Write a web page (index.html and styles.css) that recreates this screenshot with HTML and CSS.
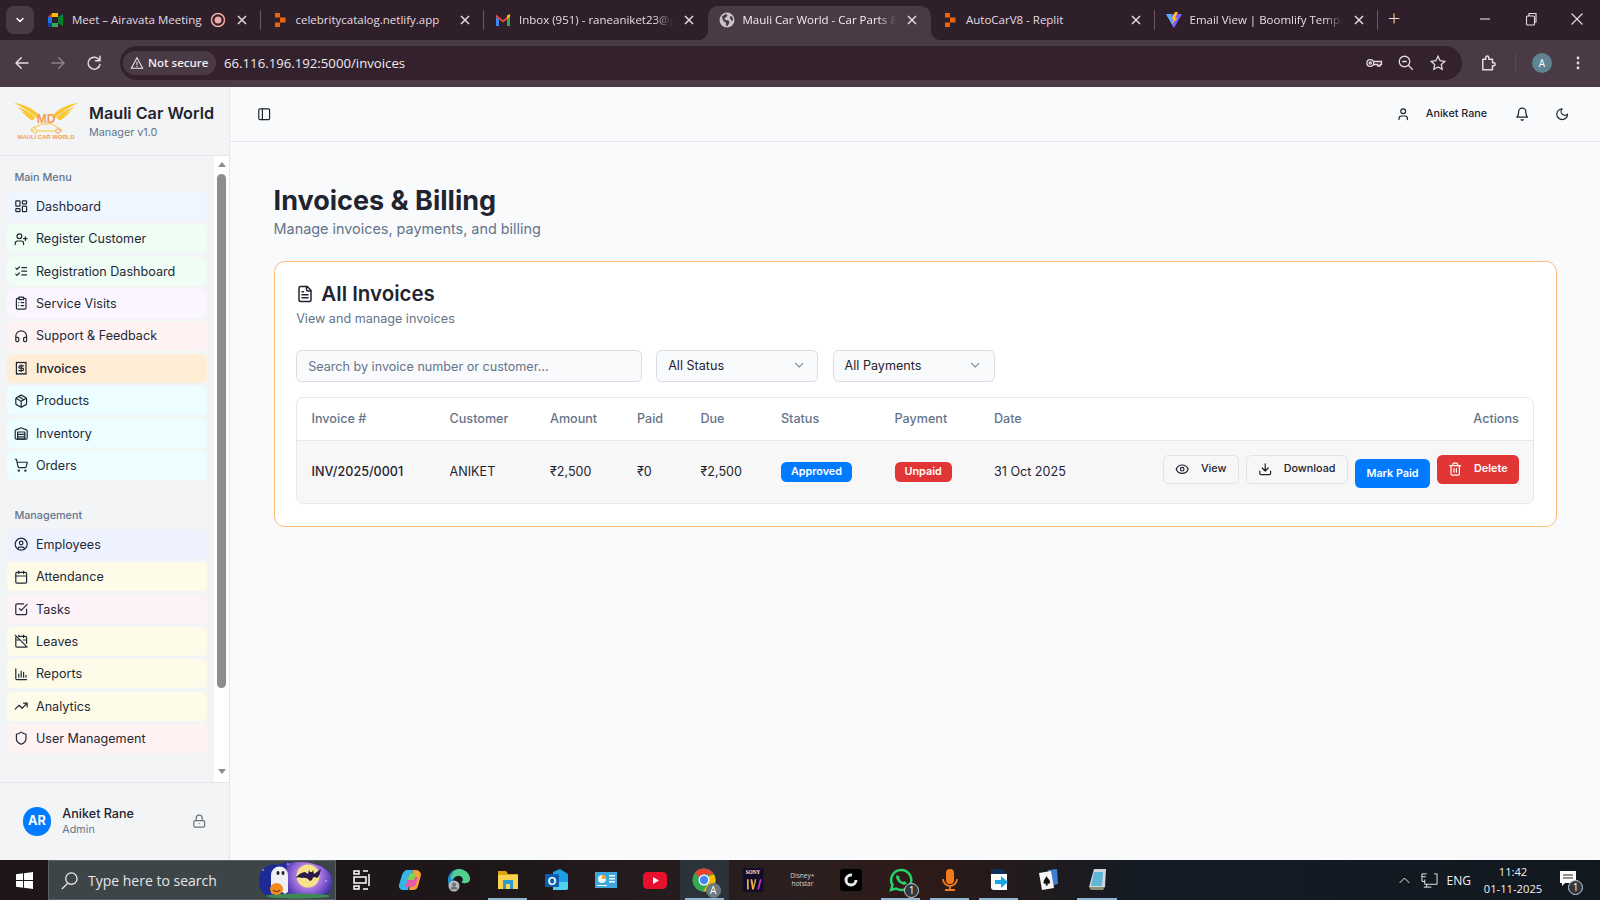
FILE: index.html
```html
<!DOCTYPE html>
<html lang="en">
<head>
<meta charset="utf-8">
<title>Mauli Car World - Invoices</title>
<link rel="stylesheet" href="styles.css">
</head>
<body>
<svg class="sprite" xmlns="http://www.w3.org/2000/svg">
  <symbol id="i-dash" viewBox="0 0 24 24"><rect x="3" y="3" width="7" height="9" rx="1"/><rect x="14" y="3" width="7" height="5" rx="1"/><rect x="14" y="12" width="7" height="9" rx="1"/><rect x="3" y="16" width="7" height="5" rx="1"/></symbol>
  <symbol id="i-userplus" viewBox="0 0 24 24"><path d="M16 21v-2a4 4 0 0 0-4-4H6a4 4 0 0 0-4 4v2"/><circle cx="9" cy="7" r="4"/><path d="M19 8v6M22 11h-6"/></symbol>
  <symbol id="i-checks" viewBox="0 0 24 24"><path d="m3 17 2 2 4-4M3 7l2 2 4-4M13 6h8M13 12h8M13 18h8"/></symbol>
  <symbol id="i-clip" viewBox="0 0 24 24"><rect x="8" y="2" width="8" height="4" rx="1"/><path d="M16 4h2a2 2 0 0 1 2 2v14a2 2 0 0 1-2 2H6a2 2 0 0 1-2-2V6a2 2 0 0 1 2-2h2M12 11h4M12 16h4M8 11h.01M8 16h.01"/></symbol>
  <symbol id="i-head" viewBox="0 0 24 24"><path d="M3 14h3a2 2 0 0 1 2 2v3a2 2 0 0 1-2 2H5a2 2 0 0 1-2-2v-7a9 9 0 0 1 18 0v7a2 2 0 0 1-2 2h-1a2 2 0 0 1-2-2v-3a2 2 0 0 1 2-2h3"/></symbol>
  <symbol id="i-receipt" viewBox="0 0 24 24"><path d="M4 2v20l2-1 2 1 2-1 2 1 2-1 2 1 2-1 2 1V2l-2 1-2-1-2 1-2-1-2 1-2-1-2 1Z"/><path d="M16 8h-6a2 2 0 1 0 0 4h4a2 2 0 1 1 0 4H8M12 17.5v-11"/></symbol>
  <symbol id="i-package" viewBox="0 0 24 24"><path d="M11 21.73a2 2 0 0 0 2 0l7-4A2 2 0 0 0 21 16V8a2 2 0 0 0-1-1.73l-7-4a2 2 0 0 0-2 0l-7 4A2 2 0 0 0 3 8v8a2 2 0 0 0 1 1.73zM12 22V12M3.29 7 12 12l8.71-5M7.5 4.27l9 5.15"/></symbol>
  <symbol id="i-ware" viewBox="0 0 24 24"><path d="M22 8.35V20a2 2 0 0 1-2 2H4a2 2 0 0 1-2-2V8.35A2 2 0 0 1 3.26 6.5l8-3.2a2 2 0 0 1 1.48 0l8 3.2A2 2 0 0 1 22 8.35ZM6 18h12M6 14h12"/><rect x="6" y="10" width="12" height="12"/></symbol>
  <symbol id="i-cart" viewBox="0 0 24 24"><circle cx="8" cy="21" r="1"/><circle cx="19" cy="21" r="1"/><path d="M2.05 2.05h2l2.66 12.42a2 2 0 0 0 2 1.58h9.78a2 2 0 0 0 1.95-1.57l1.65-7.43H5.12"/></symbol>
  <symbol id="i-ucircle" viewBox="0 0 24 24"><circle cx="12" cy="12" r="10"/><circle cx="12" cy="10" r="3"/><path d="M7 20.66V19a2 2 0 0 1 2-2h6a2 2 0 0 1 2 2v1.66"/></symbol>
  <symbol id="i-cal" viewBox="0 0 24 24"><path d="M8 2v4M16 2v4M3 10h18"/><rect x="3" y="4" width="18" height="18" rx="2"/></symbol>
  <symbol id="i-task" viewBox="0 0 24 24"><path d="m9 11 3 3L22 4M21 12v7a2 2 0 0 1-2 2H5a2 2 0 0 1-2-2V5a2 2 0 0 1 2-2h11"/></symbol>
  <symbol id="i-caloff" viewBox="0 0 24 24"><path d="M4.2 4.2A2 2 0 0 0 3 6v14a2 2 0 0 0 2 2h14a2 2 0 0 0 1.82-1.18M21 15.5V6a2 2 0 0 0-2-2H9.5M16 2v4M8 2v2M3 10h7M21 10h-5.5M2 2l20 20"/></symbol>
  <symbol id="i-bars" viewBox="0 0 24 24"><path d="M3 3v16a2 2 0 0 0 2 2h16M8 17v-5M12 17V7M16 17v-8M20 17v-3"/></symbol>
  <symbol id="i-trend" viewBox="0 0 24 24"><path d="M22 7l-8.5 8.5-5-5L2 17M16 7h6v6"/></symbol>
  <symbol id="i-shield" viewBox="0 0 24 24"><path d="M20 13c0 5-3.5 7.5-7.66 8.95a1 1 0 0 1-.67-.01C7.5 20.5 4 18 4 13V6a1 1 0 0 1 1-1c2 0 4.5-1.2 6.24-2.72a1.17 1.17 0 0 1 1.52 0C14.51 3.81 17 5 19 5a1 1 0 0 1 1 1z"/></symbol>
  <symbol id="i-lock" viewBox="0 0 24 24"><rect x="3" y="11" width="18" height="11" rx="2"/><path d="M7 11V7a5 5 0 0 1 10 0v4M12 16h.01"/></symbol>
  <symbol id="i-panel" viewBox="0 0 24 24"><rect x="3" y="3" width="18" height="18" rx="2"/><path d="M9 3v18"/></symbol>
  <symbol id="i-user" viewBox="0 0 24 24"><path d="M19 21v-2a4 4 0 0 0-4-4H9a4 4 0 0 0-4 4v2"/><circle cx="12" cy="7" r="4"/></symbol>
  <symbol id="i-bell" viewBox="0 0 24 24"><path d="M6 8a6 6 0 0 1 12 0c0 7 3 9 3 9H3s3-2 3-9M10.3 21a1.94 1.94 0 0 0 3.4 0"/></symbol>
  <symbol id="i-moon" viewBox="0 0 24 24"><path d="M12 3a6 6 0 0 0 9 9 9 9 0 1 1-9-9Z"/></symbol>
  <symbol id="i-file" viewBox="0 0 24 24"><path d="M15 2H6a2 2 0 0 0-2 2v16a2 2 0 0 0 2 2h12a2 2 0 0 0 2-2V7ZM14 2v4a2 2 0 0 0 2 2h4M10 9H8M16 13H8M16 17H8"/></symbol>
  <symbol id="i-eye" viewBox="0 0 24 24"><path d="M2 12s3-7 10-7 10 7 10 7-3 7-10 7-10-7-10-7Z"/><circle cx="12" cy="12" r="3"/></symbol>
  <symbol id="i-down" viewBox="0 0 24 24"><path d="M21 15v4a2 2 0 0 1-2 2H5a2 2 0 0 1-2-2v-4M7 10l5 5 5-5M12 15V3"/></symbol>
  <symbol id="i-trash" viewBox="0 0 24 24"><path d="M3 6h18M19 6v14c0 1-1 2-2 2H7c-1 0-2-1-2-2V6M8 6V4c0-1 1-2 2-2h4c1 0 2 1 2 2v2M10 11v6M14 11v6"/></symbol>
  <symbol id="i-chev" viewBox="0 0 24 24"><path d="m6 9 6 6 6-6"/></symbol>
  <symbol id="i-x" viewBox="0 0 16 16"><path d="M4 4l8 8M12 4l-8 8"/></symbol>
  <symbol id="f-replit" viewBox="0 0 16 16"><path fill="#f26207" stroke="none" d="M3 1h5v4.500H3zM8 5.500h5.500v5H8zM3 10.500h5V15H3z"/></symbol>
  <symbol id="f-globe" viewBox="0 0 16 16"><circle cx="8" cy="8" r="7.500" fill="#c9c3c8" stroke="none"/><path fill="#4a3a45" stroke="none" d="M3 4.500 6.500 2l2 1-1 2-2 1 1 2 3 .5 1 2-2 3.500-1.500-.5V11L4 8.500ZM11 4l2.500 1 .5 4-1.500-.5-1.500-2Z"/></symbol>
  <symbol id="logo-wing" viewBox="0 0 64 40"><path d="M0 0C10 1 20 6 26 13L23 15C17 9 8 4 0 0Z"/><path d="M3 4C10 6 16 9 22 15L19 16C14 12 9 8 3 4Z"/><path d="M7 8C12 10 16 12 20 17L17 17C13 14 10 11 7 8Z"/></symbol>
</svg>

<header class="tabstrip">
  <div class="tabmenu"><svg class="ico ico-12 ico-w" viewBox="0 0 24 24"><use href="#i-chev"/></svg></div>
  <div class="tab sep">
    <svg class="fav" viewBox="0 0 16 16"><path fill="#fbbc04" d="M4 1h6v4H4z"/><path fill="#ea4335" d="M0 5l4-4v4z"/><path fill="#1a73e8" d="M0 5h4v6H0z"/><path fill="#0d47a1" d="M0 11h4v4H1.500A1.500 1.500 0 0 1 0 13.500z"/><path fill="#34a853" d="M4 11h6v4H4z"/><path fill="#00832d" d="M10 5l5-3v12l-5-3z"/></svg>
    <span class="tabtext">Meet – Airavata Meeting</span>
    <svg class="rec" viewBox="0 0 16 16"><circle cx="8" cy="8" r="6.500" fill="none" stroke="#f4a9a0" stroke-width="1.500"/><circle cx="8" cy="8" r="3.500" fill="#f4a9a0"/></svg>
    <svg class="tabx"><use href="#i-x"/></svg>
  </div>
  <div class="tab sep">
    <svg class="fav"><use href="#f-replit"/></svg>
    <span class="tabtext">celebritycatalog.netlify.app</span>
    <svg class="tabx"><use href="#i-x"/></svg>
  </div>
  <div class="tab">
    <svg class="fav" viewBox="0 0 16 16"><path fill="#4285f4" d="M1 4v10h3V7z"/><path fill="#34a853" d="M12 7v7h3V4z"/><path fill="#ea4335" d="M1 2.500 8 8l7-5.500V5L8 10.500 1 5z"/><path fill="#fbbc04" d="M12 3.500 15 2v3l-3 2z"/></svg>
    <span class="tabtext fade">Inbox (951) - raneaniket23@g</span>
    <svg class="tabx"><use href="#i-x"/></svg>
  </div>
  <div class="tab active">
    <svg class="fav"><use href="#f-globe"/></svg>
    <span class="tabtext fade">Mauli Car World - Car Parts &amp;</span>
    <svg class="tabx"><use href="#i-x"/></svg>
  </div>
  <div class="tab sep">
    <svg class="fav"><use href="#f-replit"/></svg>
    <span class="tabtext">AutoCarV8 - Replit</span>
    <svg class="tabx"><use href="#i-x"/></svg>
  </div>
  <div class="tab sep">
    <svg class="fav" viewBox="0 0 16 16"><path fill="#7c5cff" d="M0 2h16L8 16z"/><path fill="#41d1ff" d="M0 2h5l3 14z" opacity=".7"/><path fill="#ffc517" d="M9 0l3 0-3 6 2.500 0L6 12l1.500-5H5.500z"/></svg>
    <span class="tabtext fade">Email View | Boomlify Tempo</span>
    <svg class="tabx"><use href="#i-x"/></svg>
  </div>
  <div class="newtab">+</div>
  <div class="winctl">
    <svg class="winbtn" viewBox="0 0 16 16"><path d="M3 8h10"/></svg>
    <svg class="winbtn" viewBox="0 0 16 16"><rect x="3.500" y="5" width="8" height="9" rx="1"/><path d="M6 5V2.500h7V11h-1.500"/></svg>
    <svg class="winbtn" viewBox="0 0 16 16"><path d="M2.500 2.500l11 11M13.500 2.500l-11 11"/></svg>
  </div>
</header>

<div class="toolbar">
  <svg class="tool tool-first" viewBox="0 0 24 24"><path d="M20 12H5M11 5l-7 7 7 7"/></svg>
  <svg class="tool dim" viewBox="0 0 24 24"><path d="M4 12h15M13 5l7 7-7 7"/></svg>
  <svg class="tool" viewBox="0 0 24 24"><path d="M19 8a8 8 0 1 0 1 6M20 3v6h-6"/></svg>
  <div class="omnibox">
    <div class="chip">
      <svg class="chip-ico" viewBox="0 0 16 16"><path d="M8 2 1.500 14h13z M8 6.500v4 M8 11.500v1"/></svg>
      <span>Not secure</span>
    </div>
    <span class="url">66.116.196.192:5000/invoices</span>
    <svg class="omni-ico" viewBox="0 0 24 24"><circle cx="7" cy="12" r="4.500"/><circle cx="7" cy="12" r="1.500"/><path d="M11.500 10H22v4h-2v2h-3v-2h-5.500"/></svg>
    <svg class="omni-ico" viewBox="0 0 24 24"><circle cx="10" cy="10" r="7"/><path d="M15 15l6 6M7 10h6"/></svg>
    <svg class="omni-ico" viewBox="0 0 24 24"><path d="M12 3l2.800 6 6.200.8-4.600 4.300 1.200 6.400L12 17.300 6.400 20.500l1.200-6.400L3 9.800 9.200 9z"/></svg>
  </div>
  <svg class="tool tool-ext" viewBox="0 0 24 24"><path d="M5 7h4V4.500a2 2 0 0 1 4 0V7h5v4.500h1.500a2 2 0 0 1 0 4H18V21H5z"/></svg>
  <span class="tool-sep"></span>
  <div class="profile">A</div>
  <svg class="tool-menu" viewBox="0 0 16 16"><circle cx="8" cy="3" r="1.400"/><circle cx="8" cy="8" r="1.400"/><circle cx="8" cy="13" r="1.400"/></svg>
</div>

<div class="app">
  <aside class="sidebar">
    <div class="brand">
      <svg class="logo" viewBox="0 0 64 40">
        <use href="#logo-wing" class="wing" width="64" height="40"/>
        <use href="#logo-wing" class="wing" width="64" height="40" transform="translate(64 0) scale(-1 1)"/>
        <text class="logo-md" x="32" y="19.500" text-anchor="middle">MD</text>
        <path fill="none" stroke="#fbc531" stroke-width="1" d="M17 28c0-3 2-4 5-4l5-3h11l6 4c2 0 4 1 4 3z"/>
        <circle cx="21" cy="28" r="2.200" fill="#f3f4f6" stroke="#fbc531" stroke-width="1"/>
        <circle cx="44" cy="28" r="2.200" fill="#f3f4f6" stroke="#f49a5a" stroke-width="1"/>
        <text class="logo-name" x="32" y="36" text-anchor="middle">MAULI CAR WORLD</text>
      </svg>
      <div class="brand-text">
        <div class="brand-title">Mauli Car World</div>
        <div class="brand-sub">Manager v1.0</div>
      </div>
    </div>
    <div class="navwrap">
      <nav class="nav">
        <div class="navlabel">Main Menu</div>
        <ul class="navlist">
          <li class="navitem c-blue"><svg class="ico"><use href="#i-dash"/></svg>Dashboard</li>
          <li class="navitem c-green"><svg class="ico"><use href="#i-userplus"/></svg>Register Customer</li>
          <li class="navitem c-green"><svg class="ico"><use href="#i-checks"/></svg>Registration Dashboard</li>
          <li class="navitem c-purple"><svg class="ico"><use href="#i-clip"/></svg>Service Visits</li>
          <li class="navitem c-red"><svg class="ico"><use href="#i-head"/></svg>Support &amp; Feedback</li>
          <li class="navitem c-orange"><svg class="ico"><use href="#i-receipt"/></svg>Invoices</li>
          <li class="navitem c-cyan"><svg class="ico"><use href="#i-package"/></svg>Products</li>
          <li class="navitem c-cyan"><svg class="ico"><use href="#i-ware"/></svg>Inventory</li>
          <li class="navitem c-cyan"><svg class="ico"><use href="#i-cart"/></svg>Orders</li>
        </ul>
        <div class="navlabel navlabel-2">Management</div>
        <ul class="navlist">
          <li class="navitem c-indigo"><svg class="ico"><use href="#i-ucircle"/></svg>Employees</li>
          <li class="navitem c-yellow"><svg class="ico"><use href="#i-cal"/></svg>Attendance</li>
          <li class="navitem c-pink"><svg class="ico"><use href="#i-task"/></svg>Tasks</li>
          <li class="navitem c-yellow"><svg class="ico"><use href="#i-caloff"/></svg>Leaves</li>
          <li class="navitem c-yellow"><svg class="ico"><use href="#i-bars"/></svg>Reports</li>
          <li class="navitem c-yellow"><svg class="ico"><use href="#i-trend"/></svg>Analytics</li>
          <li class="navitem c-red"><svg class="ico"><use href="#i-shield"/></svg>User Management</li>
        </ul>
      </nav>
      <div class="scrolltrack">
        <span class="arrow-up"></span>
        <span class="thumb"></span>
        <span class="arrow-down"></span>
      </div>
    </div>
    <div class="sidefoot">
      <div class="avatar">AR</div>
      <div class="foot-text">
        <div class="foot-name">Aniket Rane</div>
        <div class="foot-role">Admin</div>
      </div>
      <svg class="ico ico-lock"><use href="#i-lock"/></svg>
    </div>
  </aside>

  <main class="main">
    <div class="topbar">
      <svg class="ico top-panel"><use href="#i-panel"/></svg>
      <div class="top-right">
        <svg class="ico"><use href="#i-user"/></svg>
        <span class="top-name">Aniket Rane</span>
        <svg class="ico top-bell"><use href="#i-bell"/></svg>
        <svg class="ico top-moon"><use href="#i-moon"/></svg>
      </div>
    </div>
    <div class="content">
      <h1 class="title">Invoices &amp; Billing</h1>
      <p class="subtitle">Manage invoices, payments, and billing</p>
      <section class="card">
        <h2 class="card-title"><svg class="ico ico-title"><use href="#i-file"/></svg>All Invoices</h2>
        <p class="card-desc">View and manage invoices</p>
        <div class="filters">
          <input class="search" type="text" placeholder="Search by invoice number or customer...">
          <div class="select">All Status<svg class="ico ico-chev"><use href="#i-chev"/></svg></div>
          <div class="select">All Payments<svg class="ico ico-chev"><use href="#i-chev"/></svg></div>
        </div>
        <div class="tablewrap">
          <table class="table">
            <colgroup>
              <col class="col-inv"><col class="col-cust"><col class="col-amt"><col class="col-paid"><col class="col-due"><col class="col-status"><col class="col-pay"><col class="col-date"><col>
            </colgroup>
            <thead>
              <tr><th>Invoice #</th><th>Customer</th><th>Amount</th><th>Paid</th><th>Due</th><th>Status</th><th>Payment</th><th>Date</th><th class="right">Actions</th></tr>
            </thead>
            <tbody>
              <tr>
                <td class="strong">INV/2025/0001</td>
                <td>ANIKET</td>
                <td>₹2,500</td>
                <td>₹0</td>
                <td>₹2,500</td>
                <td><span class="badge b-blue">Approved</span></td>
                <td><span class="badge b-red">Unpaid</span></td>
                <td>31 Oct 2025</td>
                <td class="actions-cell">
                  <div class="actions">
                    <button class="btn btn-out"><svg class="ico ico-btn"><use href="#i-eye"/></svg>View</button>
                    <button class="btn btn-out"><svg class="ico ico-btn"><use href="#i-down"/></svg>Download</button>
                    <button class="btn btn-blue">Mark Paid</button>
                    <button class="btn btn-red"><svg class="ico ico-btn"><use href="#i-trash"/></svg>Delete</button>
                  </div>
                </td>
              </tr>
            </tbody>
          </table>
        </div>
      </section>
    </div>
  </main>
</div>

<footer class="taskbar">
  <div class="startbtn">
    <svg class="winlogo" viewBox="0 0 18 18"><path fill="#fff" d="M0 2.500 7.500 1.400V8.500H0zM8.500 1.300 18 0V8.500H8.500zM0 9.500H7.500V16.600L0 15.500zM8.500 9.500H18V18L8.500 16.700z"/></svg>
  </div>
  <div class="tasksearch">
    <svg class="sglass" viewBox="0 0 20 20"><circle cx="12" cy="8" r="6"/><path d="M8 13 2 19"/></svg>
    <span class="stext">Type here to search</span>
    <svg class="doodle" viewBox="0 0 76 38">
      <defs>
        <radialGradient id="glow" cx="50" cy="15" r="26" gradientUnits="userSpaceOnUse">
          <stop offset="0" stop-color="#e9c9f2"/>
          <stop offset=".55" stop-color="#a06fdc"/>
          <stop offset="1" stop-color="#3f2fa8"/>
        </radialGradient>
      </defs>
      <path fill="#1e2a96" d="M1 20C0 8 10 2 20 4 30 0 40 1 44 4 58 0 72 6 74 18 75 27 72 33 64 35H10C4 33 1 28 1 20Z"/>
      <path fill="url(#glow)" d="M28 3C40 0 50 1 56 3 66 5 73 11 74 18 75 27 72 33 64 35H30Z"/>
      <ellipse cx="40" cy="35" rx="32" ry="2.500" fill="#3d8a55"/>
      <circle cx="50" cy="15" r="11.500" fill="#f6e38a"/>
      <path fill="#2a1a4a" d="M37 17C41 13 44 11 47 11L50 13 51 9 52 11H54L55 9 56 13C59 11 61 9 63 8 62 11 62 15 59 17 56 15 55 16 54 19L52 20C50 17 47 16 44 17 41 16 39 16 37 17Z"/>
      <path fill="#f1eef6" d="M13 31V14A8 8 0 0 1 30 14V31L27 33 24 31 20 33 17 31 14 33Z"/>
      <ellipse cx="20" cy="12" rx="1.500" ry="2" fill="#222"/>
      <ellipse cx="25" cy="12" rx="1.500" ry="2" fill="#222"/>
      <ellipse cx="18.500" cy="28" rx="6.500" ry="6" fill="#f08a1e"/>
      <path fill="none" stroke="#3a1d05" stroke-width="1" d="M15 29c2 2 5 2 7 0"/>
      <circle cx="5" cy="9" r=".7" fill="#fff"/><circle cx="30" cy="3" r=".7" fill="#fff"/><circle cx="68" cy="20" r=".7" fill="#fff"/>
    </svg>
  </div>
  <div class="tray-apps">
    <div class="slot"><svg class="tico" viewBox="0 0 24 24"><path fill="none" stroke="#fff" stroke-width="1.500" d="M5 3h5v3H5zM14 3h5M20 6v12M5 9h12v6H5zM5 18h5v3H5zM14 21h5"/></svg></div>
    <div class="slot"><svg class="tico" viewBox="0 0 24 24"><path fill="#37b4e8" d="M9 2h6l-5 20H5a4 4 0 0 1-4-5l3-10c1-3 3-5 5-5z"/><path fill="#f5a13b" d="M15 2h3a5 5 0 0 1 5 5l-3 11a5 5 0 0 1-5 4h-4z"/><path fill="#e85aa8" d="M11 9h9l-2 7a4 4 0 0 1-4 3H7z"/><path fill="#8bd04a" d="M13 5h5l-2 7H9z"/></svg></div>
    <div class="slot"><svg class="tico" viewBox="0 0 24 24"><path fill="#1f8fd4" d="M1 13A11 11 0 0 1 23 11C23 15 18 16 14.500 14.500 18 12 15 6.500 10 8 6 9.500 5 14 7.500 18.500 9 21 6 23 4 21 2 19 1 16 1 13Z"/><path fill="#52cf8e" d="M12 1A11 11 0 0 1 23 11C23 15 18 16 14.500 14.500 18 12 15 6.500 10 8 6.500 9 4 12 4 12 4 6 7 1 12 1Z"/><circle cx="7" cy="18" r="5.500" fill="#b9bcc0"/><circle cx="7" cy="16.500" r="2" fill="#6d7277"/><path fill="#6d7277" d="M3.500 21.500a3.500 3 0 0 1 7 0Z"/></svg></div>
    <div class="slot run"><svg class="tico" viewBox="0 0 24 24"><path fill="#e0a412" d="M2 3h8l2 3h10v15H2z"/><path fill="#fbd24e" d="M2 7h20v14H2z"/><path fill="#2a9ad6" d="M7 21V13a1 1 0 0 1 1-1h8a1 1 0 0 1 1 1v8h-3v-5h-4v5Z"/></svg></div>
    <div class="slot"><svg class="tico" viewBox="0 0 24 24"><path fill="#1f9ee8" d="M8 4l7-3 8 5v14a2 2 0 0 1-2 2H8Z"/><path fill="#52d0ee" d="M8 14h15v6a2 2 0 0 1-2 2H8Z"/><rect x="0" y="6" width="14" height="13" rx="1" fill="#0f5cae"/><text class="t-o" x="7" y="16.500" text-anchor="middle">O</text></svg></div>
    <div class="slot"><svg class="tico" viewBox="0 0 24 24"><rect x="1" y="4" width="22" height="16" fill="#3ba7dd"/><circle cx="8" cy="11" r="4" fill="#e8f5fb"/><path fill="#f6a623" d="M8 11V7a4 4 0 0 1 4 4Z"/><path fill="#fff" d="M15 7h6v1.500h-6zM15 10h6v1.500h-6zM15 13h6v1.500h-6zM3 17h10v1H3z"/></svg></div>
    <div class="slot"><svg class="tico" viewBox="0 0 24 24"><rect x="0" y="4" width="24" height="17" rx="4.500" fill="#e8112d"/><path fill="#fff" d="M10 9v7l6-3.500z"/></svg></div>
    <div class="slot slot-on run"><svg class="tico" viewBox="0 0 24 24"><circle cx="12" cy="12" r="11.500" fill="#34a853"/><path fill="#ea4335" d="M12 .5A11.500 11.500 0 0 1 22 6.500H12A5.500 5.500 0 0 0 7 9.500L3 4.500A11.500 11.500 0 0 1 12 .5Z"/><path fill="#fbbc04" d="M22 6.500A11.500 11.500 0 0 1 11 23.500L16.500 15 17 8Z"/><circle cx="12" cy="12" r="5.500" fill="#fff"/><circle cx="12" cy="12" r="4.200" fill="#4285f4"/></svg><span class="tbadge tbadge-a">A</span></div>
    <div class="slot"><svg class="tico" viewBox="0 0 24 28"><rect x="0" y="0" width="24" height="28" rx="2" fill="#120c28"/><text class="t-sony" x="12" y="7" text-anchor="middle">SONY</text><path fill="#e8b43c" d="M5 25V13h2v12zM9 13h2l2 8 1-8h2l-3 12h-2z"/><path fill="#c63cd0" d="M17 25l3-12h2l-3 12z"/></svg></div>
    <div class="slot"><span class="hotstar">Disney+<br>hotstar</span></div>
    <div class="slot"><svg class="tico" viewBox="0 0 24 24"><rect x="1" y="1" width="22" height="22" rx="3" fill="#000"/><circle cx="12" cy="12" r="5" fill="none" stroke="#e9e9e9" stroke-width="3" stroke-dasharray="24 8"/></svg></div>
    <div class="slot run"><svg class="tico" viewBox="0 0 24 24"><path fill="none" stroke="#25d366" stroke-width="2.500" d="M12 2a10 10 0 0 0-8.500 15L2 22l5-1.500A10 10 0 1 0 12 2z"/><path fill="#25d366" d="M8 7c-2 2 0 6 3 8s5 3 7 0l-3-2-1 1c-2-1-3-2-4-4l1-1z"/></svg><span class="tbadge">1</span></div>
    <div class="slot run"><svg class="tico" viewBox="0 0 24 24"><rect x="8" y="1" width="8" height="15" rx="4" fill="#f47a1f"/><path fill="none" stroke="#f47a1f" stroke-width="1.800" d="M5 11a7 7 0 0 0 14 0M12 18v4M7 22h10"/></svg></div>
    <div class="slot run"><svg class="tico" viewBox="0 0 24 24"><path fill="#0d2f58" d="M4 1h11l5 5v3H4z"/><path fill="#fff" d="M4 6h16v16H7a3 3 0 0 1-3-3z"/><path fill="#1aa5e8" d="M8 12h6V8l7 6-7 6v-4H8z"/></svg></div>
    <div class="slot"><svg class="tico" viewBox="0 0 24 24"><path fill="#3c7fd0" d="M12 2l9-1 1 15-8 2z"/><path fill="#f6f6f6" d="M3 5l12-2 3 17-12 2z"/><path fill="#111" d="M10.500 8c1.500 3 4 4 3.500 6.500-.2 1.500-2 1.700-2.700.7l.7 2.300H9.500l.6-2c-1 .7-2.600.2-2.600-1.300 0-2.300 2-3.500 3-6.200z"/></svg></div>
    <div class="slot run"><svg class="tico" viewBox="0 0 24 24"><path fill="#cfd8dc" d="M9 1h12l-1 18H4z"/><path fill="#5fb7d8" d="M9 4h9l-1 14H6z"/><path fill="#8a8f70" d="M4 19h16l-2 3H6z"/></svg></div>
  </div>
  <div class="systray">
    <svg class="sys-chev" viewBox="0 0 16 16"><path d="M2 11l6-6 6 6"/></svg>
    <svg class="sys-net" viewBox="0 0 18 18"><path d="M1 2h5M1 2v8h3M14 2h3v11H4V8M6 13v3M3 16h8M1 5h4"/></svg>
    <span class="sys-lang">ENG</span>
    <div class="clock"><div>11:42</div><div>01-11-2025</div></div>
    <div class="notif">
      <svg class="notif-ico" viewBox="0 0 18 18"><path fill="#fff" d="M1 1h16v12H6l-3 3v-3H1z"/><path stroke="#222" stroke-width="1" d="M4 5h10M4 8h10"/></svg>
      <span class="tbadge tbadge-n">1</span>
    </div>
  </div>
</footer>
</body>
</html>
```

FILE: styles.css
```css
* { box-sizing: border-box; }
html, body { margin: 0; height: 100%; }
body {
  display: flex;
  flex-direction: column;
  height: 900px;
  overflow: hidden;
  font-family: Inter, "Liberation Sans", sans-serif;
  color: #1f2430;
  background: #f9fafb;
}
.sprite { display: none; }
.ico {
  width: 14.4px;
  height: 14.4px;
  flex: none;
  fill: none;
  stroke: currentColor;
  stroke-width: 2;
  stroke-linecap: round;
  stroke-linejoin: round;
}
.ico-12 { width: 12px; height: 12px; }
.ico-w { color: #fff; stroke-width: 3; }

/* browser tab strip */
.tabstrip {
  height: 40px;
  flex: none;
  display: flex;
  background: #2e1f2b;
  font-family: "Open Sans", "Noto Sans", sans-serif;
  font-size: 11.5px;
  color: #e3dde1;
}
.tabmenu {
  width: 28px;
  height: 28px;
  margin: 6px 3px 0 6px;
  border-radius: 8px;
  background: #4a3a45;
  display: flex;
  align-items: center;
  justify-content: center;
}
.tab {
  position: relative;
  width: 223.500px;
  height: 34px;
  margin-top: 6px;
  padding: 0 11px 6px 11px;
  display: flex;
  align-items: center;
  gap: 8px;
  flex: none;
}
.tab.sep::after {
  content: "";
  position: absolute;
  right: 0;
  top: 4px;
  height: 20px;
  width: 1px;
  background: #6b5a66;
}
.tab.active {
  background: #4a3a45;
  border-radius: 10px 10px 0 0;
  color: #f2eef1;
}
.tab.active::before,
.tab.active::after {
  content: "";
  position: absolute;
  bottom: 0;
  width: 10px;
  height: 10px;
}
.tab.active::before {
  left: -10px;
  background: radial-gradient(circle at 0 0, transparent 10px, #4a3a45 10.5px);
}
.tab.active::after {
  right: -10px;
  background: radial-gradient(circle at 100% 0, transparent 10px, #4a3a45 10.5px);
}
.fav { width: 16px; height: 16px; flex: none; }
.tabtext {
  flex: 1;
  min-width: 0;
  white-space: nowrap;
  padding-bottom: 1px;
}
.fade {
  -webkit-mask-image: linear-gradient(90deg, #000 88%, transparent);
  mask-image: linear-gradient(90deg, #000 88%, transparent);
}
.rec { width: 16px; height: 16px; flex: none; margin-left: -3px; }
.tabx {
  width: 16px;
  height: 16px;
  flex: none;
  fill: none;
  stroke: #e3dde1;
  stroke-width: 1.5;
}
.newtab {
  width: 28px;
  margin: 4px 0 0 2px;
  height: 28px;
  font-size: 22px;
  font-weight: 300;
  line-height: 26px;
  text-align: center;
  color: #e3dde1;
}
.winctl {
  margin-left: auto;
  display: flex;
  align-items: center;
  height: 38px;
}
.winbtn {
  width: 46px;
  height: 16px;
  fill: none;
  stroke: #e6e1e4;
  stroke-width: 1.100;
}

/* browser toolbar */
.toolbar {
  height: 47px;
  flex: none;
  display: flex;
  align-items: center;
  background: #4a3a45;
  padding: 0 0 1px 13px;
}
.tool {
  width: 18px;
  height: 18px;
  margin-right: 18px;
  flex: none;
  fill: none;
  stroke: #e3dde1;
  stroke-width: 2;
  stroke-linecap: round;
  stroke-linejoin: round;
}
.tool.dim { stroke: #8d7f89; }
.omnibox {
  width: 1342px;
  height: 34px;
  margin-left: -1px;
  padding: 0 15px 0 3px;
  border-radius: 17px;
  background: #33212e;
  display: flex;
  align-items: center;
  flex: none;
}
.chip {
  width: 93px;
  height: 24px;
  border-radius: 12px;
  background: #4a3a45;
  color: #f0ecef;
  display: flex;
  align-items: center;
  gap: 4px;
  padding: 0 0 1px 7px;
  font: 600 11.500px "Open Sans", "Noto Sans", sans-serif;
  flex: none;
}
.chip-ico {
  width: 14px;
  height: 14px;
  fill: none;
  stroke: #f0ecef;
  stroke-width: 1.200;
  flex: none;
}
.url {
  margin-left: 8px;
  padding-bottom: 1px;
  font: 13.200px "Open Sans", "Noto Sans", sans-serif;
  color: #eee9ec;
  flex: 1;
}
.omni-ico {
  width: 18px;
  height: 18px;
  margin-left: 14px;
  flex: none;
  fill: none;
  stroke: #e3dde1;
  stroke-width: 1.700;
}
.tool-ext { margin: 0 0 0 17px; }
.tool-sep {
  width: 1px;
  height: 22px;
  margin-left: 18px;
  background: #66566178;
  flex: none;
}
.profile {
  width: 20px;
  height: 20px;
  margin-left: 16px;
  border-radius: 50%;
  background: #5f8391;
  color: #fff;
  font: 10px/20px "Open Sans", sans-serif;
  text-align: center;
  flex: none;
}
.tool-menu {
  width: 16px;
  height: 16px;
  margin-left: 18px;
  fill: #e3dde1;
  flex: none;
}

/* app */
.app {
  height: 773px;
  flex: none;
  display: flex;
}
.sidebar {
  width: 230.4px;
  flex: none;
  display: flex;
  flex-direction: column;
  background: #f3f4f6;
  border-right: 1px solid #e5e7eb;
}
.brand {
  height: 69px;
  flex: none;
  display: flex;
  align-items: center;
  gap: 11px;
  padding-left: 14px;
  border-bottom: 1px solid #e5e7eb;
}
.logo { width: 64px; height: 40px; flex: none; margin-top: 4px; }
.wing { fill: #fbc531; }
.logo-md { font: 700 12px "Liberation Sans", sans-serif; fill: #f49a5a; }
.logo-name { font: 700 5.900px "Liberation Sans", sans-serif; fill: #f49a5a; }
.brand-text { padding-top: 1.500px; }
.brand-title { font-size: 16.200px; font-weight: 600; line-height: 22px; color: #1f2430; }
.brand-sub { font-size: 10.800px; line-height: 16px; color: #64748b; margin-top: 1px; }
.navwrap {
  height: 626px;
  flex: none;
  display: flex;
}
.nav {
  width: 214px;
  flex: none;
  padding: 13px 7.200px 0;
}
.navlabel {
  padding-left: 7.200px;
  height: 23px;
  font-size: 10.800px;
  line-height: 18px;
  font-weight: 500;
  color: #64748b;
}
.navlabel-2 { margin-top: 27px; }
.navlist {
  list-style: none;
  margin: 0;
  padding: 0;
  display: flex;
  flex-direction: column;
  gap: 3.600px;
}
.navitem {
  height: 28.800px;
  padding-left: 7.200px;
  display: flex;
  align-items: center;
  gap: 7.200px;
  border-radius: 5.400px;
  font-size: 12.600px;
  color: #1f2937;
}
.c-blue { background: #eff6ff; }
.c-green { background: #f0fdf4; }
.c-purple { background: #faf5ff; }
.c-red { background: #fef2f2; }
.c-orange { background: #ffedd5; font-weight: 500; }
.c-cyan { background: #ecfeff; }
.c-indigo { background: #eef2ff; }
.c-yellow { background: #fefce8; }
.c-pink { background: #fdf2f8; }
.scrolltrack {
  width: 15px;
  flex: none;
  background: #fff;
  position: relative;
  display: flex;
  flex-direction: column;
  align-items: center;
}
.arrow-up {
  margin-top: 6px;
  border: 4.500px solid transparent;
  border-top: 0;
  border-bottom: 5px solid #8d8d8d;
}
.thumb {
  width: 9px;
  height: 514px;
  margin-top: 7px;
  border-radius: 5px;
  background: #8d8d8d;
}
.arrow-down {
  margin-top: 81px;
  border: 4.500px solid transparent;
  border-bottom: 0;
  border-top: 5px solid #8d8d8d;
}
.sidefoot {
  flex: 1;
  display: flex;
  align-items: center;
  padding: 0 23px 0 22.500px;
  border-top: 1px solid #e5e7eb;
}
.avatar {
  width: 28.800px;
  height: 28.800px;
  border-radius: 50%;
  background: #007bff;
  color: #fff;
  font-size: 12.600px;
  font-weight: 700;
  line-height: 28.800px;
  text-align: center;
  flex: none;
}
.foot-text { margin-left: 11px; flex: 1; }
.foot-name { font-size: 12.600px; font-weight: 500; line-height: 16px; color: #1f2430; }
.foot-role { font-size: 10.800px; line-height: 15px; color: #64748b; }
.ico-lock { color: #6b7280; }

/* main */
.main { flex: 1; min-width: 0; display: flex; flex-direction: column; }
.topbar {
  height: 55px;
  flex: none;
  display: flex;
  align-items: center;
  justify-content: space-between;
  padding: 0 31px 0 27px;
  border-bottom: 1px solid #e5e7eb;
}
.top-panel { color: #1f2430; }
.top-right { display: flex; align-items: center; color: #1f2430; }
.top-name { margin-left: 15px; font-size: 10.800px; font-weight: 500; }
.top-bell { margin-left: 28px; }
.top-moon { margin-left: 25px; }
.content { padding: 43.200px 43.200px 0; }
.title {
  margin: 0;
  font-size: 27px;
  line-height: 32.400px;
  font-weight: 700;
  color: #1f2430;
}
.subtitle {
  margin: 0 0 21.600px;
  font-size: 14.400px;
  line-height: 21.600px;
  color: #64748b;
}
.card {
  height: 266px;
  padding: 21.600px;
  background: #fff;
  border: 1px solid #fdba74;
  border-radius: 10.800px;
}
.card-title {
  margin: 0;
  display: flex;
  align-items: center;
  gap: 7.200px;
  font-size: 20.500px;
  line-height: 22px;
  font-weight: 600;
  color: #1f2430;
}
.ico-title { width: 18px; height: 18px; }
.card-desc {
  margin: 5px 0 0;
  font-size: 12.600px;
  line-height: 18px;
  color: #64748b;
}
.filters {
  margin-top: 21.400px;
  display: flex;
  gap: 14.400px;
}
.search {
  width: 345.600px;
  height: 32px;
  padding: 1px 11px 0;
  background: #f9fafb;
  border: 1px solid #d9dce3;
  border-radius: 5.400px;
  font: 12.600px Inter, sans-serif;
  color: #1f2430;
  outline: none;
}
.search::placeholder { color: #64748b; opacity: 1; }
.select {
  width: 162px;
  height: 32px;
  padding: 0 11px 1px;
  display: flex;
  align-items: center;
  justify-content: space-between;
  background: #f9fafb;
  border: 1px solid #d9dce3;
  border-radius: 5.400px;
  font-size: 12.600px;
  color: #1f2430;
}
.ico-chev { color: #8b93a1; }
.tablewrap {
  margin-top: 15px;
  border: 1px solid #e5e7eb;
  border-radius: 7.200px;
  overflow: hidden;
}
.table {
  width: 100%;
  border-collapse: collapse;
  table-layout: fixed;
  font-size: 12.600px;
}
.col-inv { width: 138px; }
.col-cust { width: 100.400px; }
.col-amt { width: 87px; }
.col-paid { width: 63.500px; }
.col-due { width: 80.500px; }
.col-status { width: 113.600px; }
.col-pay { width: 99.400px; }
.col-date { width: 150px; }
th {
  height: 43px;
  padding: 0 14.400px 2px;
  text-align: left;
  font-weight: 500;
  color: #64748b;
  border-bottom: 1px solid #e5e7eb;
  white-space: nowrap;
}
th.right { text-align: right; }
tbody tr { background: #f7f7f8; }
td {
  height: 62px;
  padding: 0 14.400px 2px;
  color: #1f2430;
  white-space: nowrap;
}
td.strong { font-weight: 500; }
.badge {
  display: inline-block;
  height: 20px;
  margin-top: 2px;
  padding: 0 10px;
  border-radius: 5.400px;
  font-size: 10.800px;
  line-height: 19px;
  font-weight: 600;
  color: #fff;
}
.b-blue { background: #007bff; }
.b-red { background: #e23636; }
.actions-cell { overflow: visible; }
.actions {
  display: flex;
  justify-content: flex-end;
  align-items: flex-start;
  gap: 7.200px;
  margin-left: -200px;
  margin-top: 1px;
}
.btn {
  height: 29px;
  padding: 0 11.300px 2px 11.900px;
  display: inline-flex;
  align-items: center;
  gap: 11.500px;
  border-radius: 5.400px;
  font: 500 10.800px Inter, sans-serif;
  white-space: nowrap;
}
.ico-btn { width: 14.400px; height: 14.400px; margin-left: -1px; }
.btn-out { background: #f7f7f8; border: 1px solid #e1e3e7; color: #1f2430; }
.btn-blue {
  margin-top: 3.500px;
  padding: 0 11.500px;
  background: #007bff;
  border: 0;
  color: #fff;
  font-weight: 600;
}
.btn-red { background: #e23636; border: 0; color: #fff; font-weight: 600; }

/* taskbar */
.taskbar {
  height: 40px;
  flex: none;
  display: flex;
  align-items: stretch;
  background: linear-gradient(90deg, #1e1516 0%, #1d1719 30%, #2b1f1f 50%, #2c1a18 58%, #131b24 72%, #111820 100%);
  font-family: "Open Sans", "Noto Sans", sans-serif;
  color: #f2f2f2;
}
.startbtn { width: 48px; display: flex; align-items: center; justify-content: center; flex: none; }
.winlogo { width: 17px; height: 17px; }
.tasksearch {
  width: 288px;
  flex: none;
  display: flex;
  align-items: center;
  position: relative;
  background: #3e4549;
  border: 1px solid #5a6064;
  padding-left: 11px;
}
.sglass { width: 19px; height: 19px; fill: none; stroke: #f0f0f0; stroke-width: 1.300; flex: none; }
.stext { margin-left: 9px; font-size: 14px; color: #e4e6e7; }
.doodle { position: absolute; right: 1px; top: 0; width: 76px; height: 38px; }
.tray-apps { display: flex; flex: none; }
.slot {
  width: 49.100px;
  display: flex;
  align-items: center;
  justify-content: center;
  position: relative;
  flex: none;
}
.slot-on { background: #2b3239; }
.slot.run::after {
  content: "";
  position: absolute;
  bottom: 0;
  left: 5px;
  right: 5px;
  height: 2px;
  background: #8fb6d0;
}
.tico { width: 24px; height: 24px; flex: none; }
.t-o { font: 700 11px "Liberation Sans", sans-serif; fill: #fff; }
.t-sony { font: 700 6px "Liberation Serif", serif; fill: #fff; }
.hotstar { font-size: 6.500px; line-height: 8px; text-align: center; color: #cfd4dc; }
.tbadge {
  position: absolute;
  right: 6px;
  bottom: 2px;
  width: 15px;
  height: 15px;
  border-radius: 50%;
  background: #2f3a40;
  border: 1px solid #c9d0d4;
  font-size: 10px;
  line-height: 13px;
  text-align: center;
  color: #fff;
}
.tbadge-a { background: #6d7a80; border: 0; line-height: 15px; right: 8px; }
.systray {
  margin-left: auto;
  display: flex;
  align-items: center;
  padding-right: 17px;
}
.sys-chev { width: 13px; height: 13px; fill: none; stroke: #f0f0f0; stroke-width: 1.200; }
.sys-net { width: 17px; height: 17px; margin-left: 10px; fill: none; stroke: #f0f0f0; stroke-width: 1; }
.sys-lang { margin-left: 9px; font-size: 12px; }
.clock { margin-left: 8px; width: 68px; font-size: 11.200px; line-height: 17px; text-align: center; }
.notif { margin-left: 12px; position: relative; width: 24px; height: 28px; }
.notif-ico { width: 18px; height: 18px; margin-top: 4px; }
.tbadge-n { right: 0; bottom: -1px; }
```
